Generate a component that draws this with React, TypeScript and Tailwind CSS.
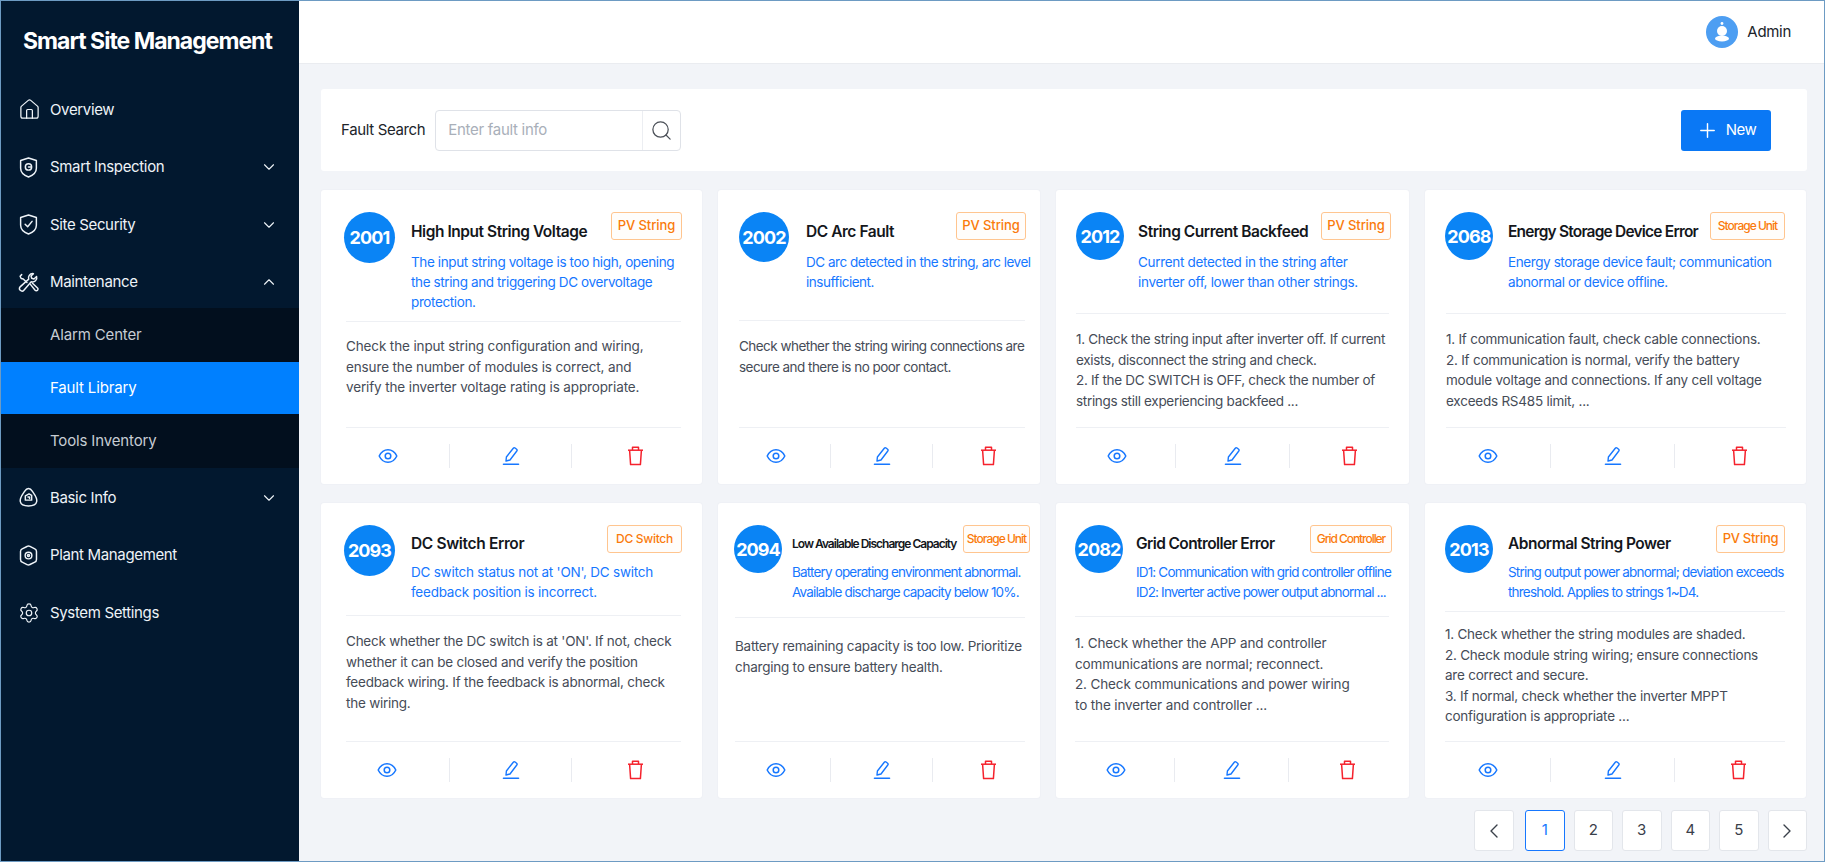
import { ChevronDown, ChevronLeft, ChevronRight, ChevronUp, House, Plus, Search, Settings } from 'lucide-react';
import type { ReactNode } from 'react';

// Small line icons that the icon packages do not have in this shape
const ShieldOutline = ({ children }: { children: ReactNode }) => (
  <svg width="21" height="21" viewBox="0 0 20 20" fill="none" stroke="currentColor" strokeWidth="1.4" strokeLinecap="round" strokeLinejoin="round">
    <path d="M10 1 17.5 3.4V10.6C17.5 14.6 14.2 17.4 10 19 5.8 17.4 2.5 14.6 2.5 10.6V3.4Z" />
    {children}
  </svg>
);

const InspectionIcon = () => (
  <ShieldOutline>
    <circle cx="10" cy="9.5" r="3" />
    <path d="M10 9.5h2" />
  </ShieldOutline>
);

const SecurityIcon = () => (
  <ShieldOutline>
    <path d="M6.8 9.8 9.2 12.2 13.4 7" />
  </ShieldOutline>
);

const ToolsIcon = () => (
  <svg width="21" height="21" viewBox="0 0 20 20" fill="none" stroke="currentColor" strokeWidth="1.4" strokeLinecap="round" strokeLinejoin="round">
    <path d="M14 1.500a4 4 0 0 0-3.800 5.300L2 14.200a2 2 0 0 0-.1 2.900l.6.600a2 2 0 0 0 2.900-.1l7.200-8.300a4 4 0 0 0 5.100-5l-2.500 2.300-2.200-.6-.6-2.200 2.300-2.200a4 4 0 0 0-.7-.100Z" />
    <path d="M3.500 2.500 2 4l1 2.200 2 .5 3.500 3.300M12 12l4.300 5.300c.6.700 1.700.7 2.300 0 .6-.6.600-1.500 0-2.100L13.800 10.700" />
  </svg>
);

const BasicInfoIcon = () => (
  <svg width="21" height="21" viewBox="0 0 20 20" fill="none" stroke="currentColor" strokeWidth="1.4" strokeLinecap="round" strokeLinejoin="round">
    <path d="M10 1.500c2.200 0 3 1.600 4.400 3.600 1.700 2.400 4.100 5.500 3.400 8.800-.6 3-4.400 4.100-7.800 4.100s-7.200-1.100-7.800-4.100c-.7-3.300 1.700-6.400 3.400-8.800C7 3.100 7.800 1.500 10 1.500Z" />
    <path d="M7 8.500 10.500 6.500 13 8v4.500H7Z" />
    <path d="M9.500 9.500H11V11" />
  </svg>
);

const PlantIcon = () => (
  <svg width="21" height="21" viewBox="0 0 20 20" fill="none" stroke="currentColor" strokeWidth="1.4" strokeLinecap="round" strokeLinejoin="round">
    <path d="M8.600 1.400a3 3 0 0 1 2.800 0l4.600 2.300c1 .5 1.600 1.500 1.600 2.600v7.400c0 1.100-.6 2.100-1.600 2.600l-4.600 2.300a3 3 0 0 1-2.800 0L4 16.300c-1-.5-1.600-1.500-1.600-2.600V6.300c0-1.100.6-2.100 1.600-2.600Z" />
    <circle cx="10" cy="10" r="3.200" />
    <circle cx="10" cy="10" r="1" />
  </svg>
);

const EyeIcon = () => (
  <svg width="20" height="16" viewBox="0 0 20 16" fill="none" stroke="#1677ff" strokeWidth="1.5" strokeLinejoin="round">
    <path d="M1.200 8C3 4.200 6.200 1.700 10 1.700S17 4.200 18.800 8C17 11.800 13.800 14.300 10 14.300S3 11.800 1.200 8Z" />
    <circle cx="10" cy="8" r="2.800" />
  </svg>
);

const PencilIcon = () => (
  <svg width="18" height="20" viewBox="0 0 18 20" fill="none" stroke="#1677ff" strokeWidth="1.4" strokeLinecap="round" strokeLinejoin="round">
    <path d="M4 15 4.400 11 11.300 2.200a1.300 1.300 0 0 1 1.800-.2l1.500 1.200c.6.500.7 1.300.2 1.800L8 14Z" />
    <path d="M1.500 18.300h15" strokeWidth="1.6" />
  </svg>
);

const TrashIcon = () => (
  <svg width="17" height="20" viewBox="0 0 17 20" fill="none" stroke="#f5222d" strokeWidth="1.5" strokeLinejoin="round">
    <path d="M1 4.200h15" />
    <path d="M5.500 4V1.300h6V4" />
    <path d="M2.600 4.200 3.600 18.600h9.800L14.400 4.200" />
  </svg>
);

const AdminAvatar = () => (
  <div className="flex h-8 w-8 items-center justify-center rounded-full bg-[#4d9ef2]">
    <svg width="20" height="22" viewBox="0 0 20 22" fill="white">
      <circle cx="10" cy="2.500" r="1.400" />
      <circle cx="10" cy="10" r="5" />
      <ellipse cx="10" cy="17.500" rx="7" ry="3" />
    </svg>
  </div>
);

const NAV_TOP = [
  { label: 'Overview', icon: <House size={23} strokeWidth={1.3} /> },
  { label: 'Smart Inspection', icon: <InspectionIcon />, arrow: 'down' },
  { label: 'Site Security', icon: <SecurityIcon />, arrow: 'down' },
  { label: 'Maintenance', icon: <ToolsIcon />, arrow: 'up' },
];

const NAV_BOTTOM = [
  { label: 'Basic Info', icon: <BasicInfoIcon />, arrow: 'down' },
  { label: 'Plant Management', icon: <PlantIcon /> },
  { label: 'System Settings', icon: <Settings size={22} strokeWidth={1.3} /> },
];

const NavItem = ({ label, icon, arrow }: { label: string; icon: ReactNode; arrow?: string }) => (
  <div className="flex h-[57.5px] items-center pl-[17px] pr-[21px] text-[15px] tracking-[-0.35px] text-[#eef3f8]">
    <span className="flex w-[32px] shrink-0">{icon}</span>
    <span className="flex-1">{label}</span>
    {arrow === 'down' && <ChevronDown size={18} strokeWidth={1.5} />}
    {arrow === 'up' && <ChevronUp size={18} strokeWidth={1.5} />}
  </div>
);

const CARDS = [
  {
    id: '2001',
    title: 'High Input String Voltage',
    titleClass: 'text-[15.5px] tracking-[-0.45px]',
    tag: 'PV String',
    tagClass: 'w-[71px] text-[13px] tracking-[-0.1px]',
    desc: ['The input string voltage is too high, opening', 'the string and triggering DC overvoltage', 'protection.'],
    descClass: 'tracking-[-0.385px]',
    body: ['Check the input string configuration and wiring,', 'ensure the number of modules is correct, and', 'verify the inverter voltage rating is appropriate.'],
    bodyText: 'tracking-[-0.13px]',
    headClass: 'h-[131px] pl-[23px] pr-[20px]',
    circleClass: 'h-[51px] w-[51px] mr-[16px]',
    rowClass: 'h-[40px]',
    titlePad: 'pt-[10px]',
    lineClass: 'ml-[25px] mr-[21px]',
    bodyClass: 'pt-[14px]',
    footClass: 'grid-cols-[122px_123px_126px] pl-[6px]',
  },
  {
    id: '2002',
    title: 'DC Arc Fault',
    titleClass: 'text-[15.5px] tracking-[-0.45px]',
    tag: 'PV String',
    tagClass: 'w-[70px] text-[13px] tracking-[-0.1px]',
    desc: ['DC arc detected in the string, arc level', 'insufficient.'],
    descClass: 'tracking-[-0.485px]',
    body: ['Check whether the string wiring connections are', 'secure and there is no poor contact.'],
    bodyText: 'tracking-[-0.53px]',
    headClass: 'h-[130px] pl-[21px] pr-[14px]',
    circleClass: 'h-[50px] w-[50px] mr-[17px]',
    rowClass: 'h-[40px]',
    titlePad: 'pt-[10px]',
    lineClass: 'ml-[21px] mr-[15px]',
    bodyClass: 'pt-[15px]',
    footClass: 'grid-cols-[108px_103px_110px] pl-[4px]',
  },
  {
    id: '2012',
    title: 'String Current Backfeed',
    titleClass: 'text-[15.5px] tracking-[-0.45px]',
    tag: 'PV String',
    tagClass: 'w-[70px] text-[13px] tracking-[-0.1px]',
    desc: ['Current detected in the string after', 'inverter off, lower than other strings.'],
    descClass: 'tracking-[-0.315px]',
    body: ['1. Check the string input after inverter off. If current', 'exists, disconnect the string and check.', '2. If the DC SWITCH is OFF, check the number of', 'strings still experiencing backfeed ...'],
    bodyText: 'tracking-[-0.31px]',
    headClass: 'h-[123px] pl-[20px] pr-[18px]',
    circleClass: 'h-[48px] w-[48px] mr-[14px]',
    rowClass: 'h-[40px]',
    titlePad: 'pt-[10px]',
    lineClass: 'ml-[20px] mr-[20px]',
    bodyClass: 'pt-[15px]',
    footClass: 'grid-cols-[116px_115px_118px] pl-[3px]',
  },
  {
    id: '2068',
    title: 'Energy Storage Device Error',
    titleClass: 'text-[15.5px] tracking-[-0.8px]',
    tag: 'Storage Unit',
    tagClass: 'w-[75px] text-[12px] tracking-[-1px]',
    desc: ['Energy storage device fault; communication', 'abnormal or device offline.'],
    descClass: 'tracking-[-0.405px]',
    body: ['1. If communication fault, check cable connections.', '2. If communication is normal, verify the battery', 'module voltage and connections. If any cell voltage', 'exceeds RS485 limit, ...'],
    bodyText: 'tracking-[-0.235px]',
    headClass: 'h-[123px] pl-[20px] pr-[21px]',
    circleClass: 'h-[48px] w-[48px] mr-[15px]',
    rowClass: 'h-[40px]',
    titlePad: 'pt-[10px]',
    lineClass: 'ml-[21px] mr-[20px]',
    bodyClass: 'pt-[15px]',
    footClass: 'grid-cols-[124px_125px_128px] pl-[1px]',
  },
  {
    id: '2093',
    title: 'DC Switch Error',
    titleClass: 'text-[15.5px] tracking-[-0.35px]',
    tag: 'DC Switch',
    tagClass: 'w-[75px] text-[12px] tracking-[-0.3px]',
    desc: ["DC switch status not at 'ON', DC switch", 'feedback position is incorrect.'],
    descClass: 'tracking-[-0.235px]',
    body: ["Check whether the DC switch is at 'ON'. If not, check", 'whether it can be closed and verify the position', 'feedback wiring. If the feedback is abnormal, check', 'the wiring.'],
    bodyText: 'tracking-[-0.235px]',
    headClass: 'h-[112px] pl-[23px] pr-[20px]',
    circleClass: 'h-[51px] w-[51px] mr-[16px]',
    rowClass: 'h-[37px]',
    titlePad: 'pt-[9px]',
    lineClass: 'ml-[25px] mr-[21px]',
    bodyClass: 'pt-[15px]',
    footClass: 'grid-cols-[124px_123px_126px] pl-[4px]',
  },
  {
    id: '2094',
    title: 'Low Available Discharge Capacity',
    titleClass: 'text-[12px] tracking-[-1px]',
    tag: 'Storage Unit',
    tagClass: 'w-[67px] text-[12px] tracking-[-1px]',
    desc: ['Battery operating environment abnormal.', 'Available discharge capacity below 10%.'],
    descClass: 'tracking-[-0.835px]',
    body: ['Battery remaining capacity is too low. Prioritize', 'charging to ensure battery health.'],
    bodyText: 'tracking-[-0.235px]',
    headClass: 'h-[114px] pl-[16px] pr-[10px]',
    circleClass: 'h-[48px] w-[48px] mr-[10px]',
    rowClass: 'h-[37px]',
    titlePad: 'pt-[9px]',
    lineClass: 'ml-[17px] mr-[15px]',
    bodyClass: 'pt-[18px]',
    footClass: 'grid-cols-[108px_103px_110px] pl-[4px]',
  },
  {
    id: '2082',
    title: 'Grid Controller Error',
    titleClass: 'text-[15.5px] tracking-[-0.6px]',
    tag: 'Grid Controller',
    tagClass: 'w-[82px] text-[12px] tracking-[-1.05px]',
    desc: ['ID1: Communication with grid controller offline', 'ID2: Inverter active power output abnormal ...'],
    descClass: 'tracking-[-0.835px]',
    body: ['1. Check whether the APP and controller', 'communications are normal; reconnect.', '2. Check communications and power wiring', 'to the inverter and controller ...'],
    bodyText: 'tracking-[-0.13px]',
    headClass: 'h-[113px] pl-[19px] pr-[17px]',
    circleClass: 'h-[48px] w-[48px] mr-[13px]',
    rowClass: 'h-[37px]',
    titlePad: 'pt-[9px]',
    lineClass: 'ml-[19px] mr-[20px]',
    bodyClass: 'pt-[16px]',
    footClass: 'grid-cols-[116px_115px_116px] pl-[2px]',
  },
  {
    id: '2013',
    title: 'Abnormal String Power',
    titleClass: 'text-[15.5px] tracking-[-0.5px]',
    tag: 'PV String',
    tagClass: 'w-[69px] text-[13px] tracking-[-0.3px]',
    desc: ['String output power abnormal; deviation exceeds', 'threshold. Applies to strings 1~D4.'],
    descClass: 'tracking-[-0.805px]',
    body: ['1. Check whether the string modules are shaded.', '2. Check module string wiring; ensure connections', 'are correct and secure.', '3. If normal, check whether the inverter MPPT', 'configuration is appropriate ...'],
    bodyText: 'tracking-[-0.235px]',
    headClass: 'h-[108px] pl-[20px] pr-[21px]',
    circleClass: 'h-[48px] w-[48px] mr-[15px]',
    rowClass: 'h-[37px]',
    titlePad: 'pt-[9px]',
    lineClass: 'ml-[20px] mr-[21px]',
    bodyClass: 'pt-[12px]',
    footClass: 'grid-cols-[124px_125px_126px] pl-[1px]',
  },
];

const FaultCard = ({ card }: { card: (typeof CARDS)[number] }) => (
  <div className="flex flex-col rounded-[3px] bg-white shadow-[0_0_2px_rgba(30,50,90,0.06)]">
    <div className={`flex shrink-0 items-start pt-[22px] ${card.headClass}`}>
      <div className={`flex shrink-0 items-center justify-center rounded-full bg-[#0a84f5] text-[18px] font-bold tracking-[-0.9px] text-white ${card.circleClass}`}>
        {card.id}
      </div>
      <div className="min-w-0 flex-1">
        <div className={`flex items-start justify-between ${card.rowClass}`}>
          <div className={`whitespace-nowrap font-semibold leading-[20px] text-[#14171c] ${card.titlePad} ${card.titleClass}`}>{card.title}</div>
          <div className={`flex h-[28px] shrink-0 items-center justify-center whitespace-nowrap rounded-[3px] border border-[#ffc58f] bg-[#fffdfb] font-medium text-[#fa7a0a] ${card.tagClass}`}>
            {card.tag}
          </div>
        </div>
        {card.desc.map((line) => (
          <div key={line} className={`whitespace-nowrap text-[13.5px] leading-[20px] text-[#1677ff] ${card.descClass}`}>{line}</div>
        ))}
      </div>
    </div>
    <div className={`h-px shrink-0 bg-[#eef0f4] ${card.lineClass}`} />
    <div className={`flex-1 ${card.lineClass} ${card.bodyClass}`}>
      {card.body.map((line) => (
        <div key={line} className={`whitespace-nowrap text-[13.5px] leading-[20.5px] text-[#464c57] ${card.bodyText}`}>{line}</div>
      ))}
    </div>
    <div className={`h-px shrink-0 bg-[#eef0f4] ${card.lineClass}`} />
    <div className={`grid h-[56px] shrink-0 items-center ${card.footClass}`}>
      <div className="flex h-6 items-center justify-center"><EyeIcon /></div>
      <div className="flex h-6 items-center justify-center border-x border-[#e9ebf0]"><PencilIcon /></div>
      <div className="flex h-6 items-center justify-center"><TrashIcon /></div>
    </div>
  </div>
);

const PageButton = ({ children, active, extra }: { children: ReactNode; active?: boolean; extra?: string }) => (
  <div
    className={`flex h-[41px] w-[39.5px] items-center justify-center rounded-[3px] border bg-white text-[15px] ${
      active ? 'border-[#1677ff] text-[#1677ff]' : 'border-[#e3e6eb] text-[#3a404a]'
    } ${extra ?? ''}`}
  >
    {children}
  </div>
);

export default function App() {
  return (
    <div className="flex h-screen w-screen overflow-hidden border border-[#6d9bc3] bg-[#f2f4f8] font-[Inter,sans-serif]">
      {/* Sidebar */}
      <aside className="flex w-[298px] shrink-0 flex-col bg-[#02182f]">
        <div className="flex h-[80px] shrink-0 items-center pl-[22px] text-[23px] font-bold tracking-[-1px] text-white">Smart Site Management</div>
        {NAV_TOP.map((item) => <NavItem key={item.label} {...item} />)}
        <div className="-mt-[3px] mb-[1px] shrink-0 bg-[#020f1e] text-[15px] tracking-[-0.15px] text-[#c6ccd3]">
          <div className="flex h-[54px] items-center pl-[49px]">Alarm Center</div>
          <div className="flex h-[52px] items-center bg-[#0080ff] pl-[49px] text-white">Fault Library</div>
          <div className="flex h-[54px] items-center pl-[49px]">Tools Inventory</div>
        </div>
        {NAV_BOTTOM.map((item) => <NavItem key={item.label} {...item} />)}
      </aside>

      <div className="flex min-w-0 flex-1 flex-col">
        {/* Top bar */}
        <header className="flex h-[63px] shrink-0 items-center justify-end gap-[9px] border-b border-[#eaecf0] bg-white pr-[33px]">
          <AdminAvatar />
          <span className="text-[15px] tracking-[-0.3px] text-[#20242a]">Admin</span>
        </header>

        <main className="flex-1 pl-[22px] pr-[17px] pt-[25px]">
          {/* Search panel */}
          <div className="flex h-[82px] items-center rounded-[3px] bg-white pl-[20px] pr-[36px]">
            <span className="mr-[10px] text-[15px] tracking-[-0.35px] text-[#20242a]">Fault Search</span>
            <div className="flex h-[41px] w-[246px] items-center rounded-[4px] border border-[#dfe2e8]">
              <span className="flex-1 pl-[12px] text-[15px] tracking-[-0.3px] text-[#a9afb9]">Enter fault info</span>
              <div className="flex h-full w-[38px] items-center justify-center border-l border-[#eceef2] text-[#4a4f57]">
                <Search size={23} strokeWidth={1.3} />
              </div>
            </div>
            <div className="ml-auto flex h-[41px] w-[90px] items-center justify-center gap-[7px] rounded-[3px] bg-[#0a78f5] text-[15px] tracking-[-0.5px] text-white">
              <Plus size={23} strokeWidth={1.5} />
              New
            </div>
          </div>

          {/* Fault cards */}
          <div className="mt-[19px] grid grid-cols-[381px_322px_353px_381px] grid-rows-[294px_295px] gap-x-[16px] gap-y-[19px]">
            {CARDS.map((card) => <FaultCard key={card.id} card={card} />)}
          </div>

          {/* Pagination */}
          <div className="mt-[12px] flex justify-end gap-[9px]">
            <PageButton extra="mr-[2.5px]"><ChevronLeft size={24} strokeWidth={1.4} /></PageButton>
            <PageButton active>1</PageButton>
            <PageButton>2</PageButton>
            <PageButton>3</PageButton>
            <PageButton>4</PageButton>
            <PageButton>5</PageButton>
            <PageButton><ChevronRight size={24} strokeWidth={1.4} /></PageButton>
          </div>
        </main>
      </div>
    </div>
  );
}
